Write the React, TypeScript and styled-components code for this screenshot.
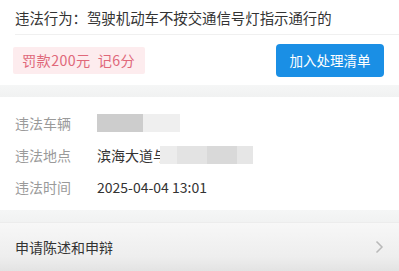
import styled, { createGlobalStyle } from "styled-components";

const GlobalStyle = createGlobalStyle`
  body {
    margin: 0;
    background: #ffffff;
    font-family: "Noto Sans CJK SC", "Noto Sans", sans-serif;
  }
`;

const Page = styled.div`
  width: 399px;
  height: 271px;
  overflow: hidden;
  display: flex;
  flex-direction: column;
`;

const Title = styled.div`
  height: 34px;
  margin-left: 15px;
  display: flex;
  align-items: center;
  border-bottom: 1px solid #f0f0f0;
  font-size: 14.4px;
  color: #333;
  white-space: nowrap;
`;

const ActionRow = styled.div`
  height: 50px;
  padding: 0 15px 0 13px;
  display: flex;
  align-items: center;
  justify-content: space-between;
`;

const FineBadge = styled.div`
  height: 27px;
  padding: 0 10px 0 9px;
  display: flex;
  align-items: center;
  background: #fdecee;
  color: #e0687a;
  font-size: 14.2px;
  letter-spacing: 0.4px;
  border-radius: 2px;
  white-space: pre;
`;

const PrimaryButton = styled.button`
  width: 108px;
  height: 33px;
  border: none;
  border-radius: 4px;
  background: #1a8fe5;
  color: #fff;
  font-family: inherit;
  font-size: 13.5px;
  padding: 0;
`;

const Gap = styled.div<{ $h: number }>`
  height: ${(p) => p.$h}px;
  background: linear-gradient(#f5f6f6, #f1f2f2);
`;

const Info = styled.div`
  padding: 10px 15px 7px;
`;

const InfoRow = styled.div`
  height: 32px;
  display: flex;
  align-items: center;
  font-size: 14px;
`;

const Label = styled.span`
  width: 82px;
  color: #9a9a9a;
  flex-shrink: 0;
`;

const Value = styled.span`
  color: #333;
  display: flex;
  align-items: center;
`;

const Blur = styled.span<{ $w: number; $c: string }>`
  display: inline-block;
  width: ${(p) => p.$w}px;
  height: 18px;
  background: ${(p) => p.$c};
`;

const BlurGroup = styled.span<{ $shift?: number }>`
  display: inline-flex;
  margin-left: ${(p) => p.$shift ?? 0}px;
  filter: blur(0.6px);
`;

const LinkRow = styled.div`
  flex: 1;
  padding: 0 15px;
  display: flex;
  align-items: center;
  justify-content: space-between;
  font-size: 14px;
  color: #333;
  border-top: 1px solid #ececec;
  background: linear-gradient(#f7f7f7, #eeeeee 70%, #e3e3e3);
`;

const Chevron = () => (
  <svg width="9" height="14" viewBox="0 0 9 14">
    <path d="M1.5 1.5 L7 7 L1.5 12.5" fill="none" stroke="#b9b9b9" strokeWidth="1.5" />
  </svg>
);

export default function App() {
  return (
    <Page>
      <GlobalStyle />
      <Title>违法行为：驾驶机动车不按交通信号灯指示通行的</Title>
      <ActionRow>
        <FineBadge>罚款200元  记6分</FineBadge>
        <PrimaryButton>加入处理清单</PrimaryButton>
      </ActionRow>
      <Gap $h={12} />
      <Info>
        <InfoRow>
          <Label>违法车辆</Label>
          <Value>
            <BlurGroup>
              <Blur $w={46} $c="#cdcdcd" />
              <Blur $w={37} $c="#efefef" />
            </BlurGroup>
          </Value>
        </InfoRow>
        <InfoRow>
          <Label>违法地点</Label>
          <Value>
            滨海大道与
            <BlurGroup $shift={-7}>
              <Blur $w={17} $c="#ececec" />
              <Blur $w={30} $c="#e3e3e3" />
              <Blur $w={30} $c="#d9d9d9" />
              <Blur $w={16} $c="#e6e6e6" />
            </BlurGroup>
          </Value>
        </InfoRow>
        <InfoRow>
          <Label>违法时间</Label>
          <Value>2025-04-04 13:01</Value>
        </InfoRow>
      </Info>
      <Gap $h={12} />
      <LinkRow>
        申请陈述和申辩
        <Chevron />
      </LinkRow>
    </Page>
  );
}
